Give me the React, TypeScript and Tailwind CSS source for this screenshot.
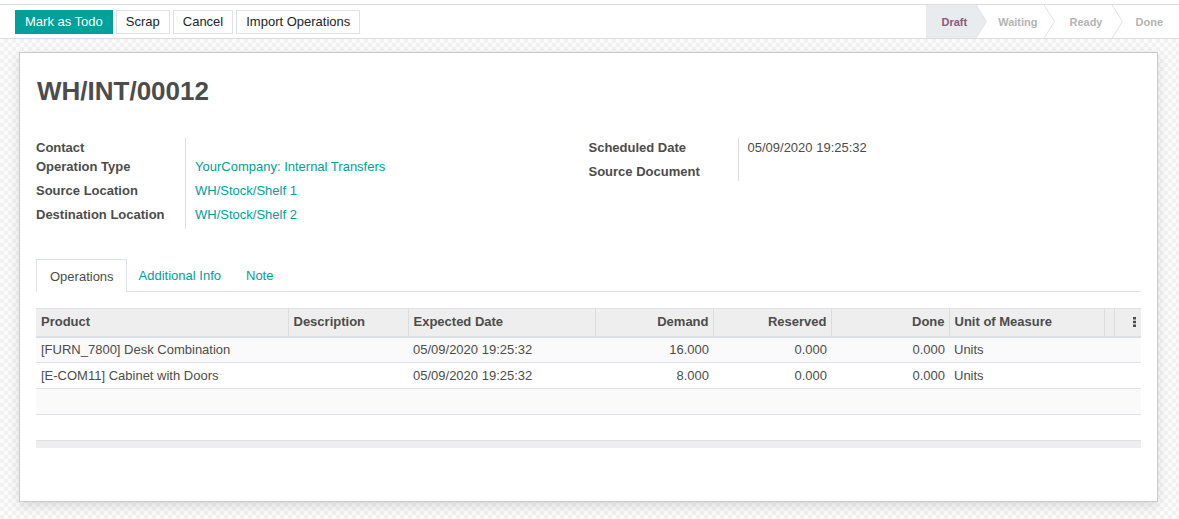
import React from "react";

const font = "font-['Liberation_Sans',Arial,sans-serif]";

function Chevron({ filled }: { filled?: boolean }) {
  return (
    <svg width="11" height="33" viewBox="0 0 11 33" className="block shrink-0">
      {filled ? (
        <polygon points="0,0 10.5,16.5 0,33" fill="#e9ecef" />
      ) : null}
      <polyline points="0,0 10.5,16.5 0,33" fill="none" stroke="#dee2e6" strokeWidth="1" />
    </svg>
  );
}

function Kebab() {
  return (
    <svg width="3" height="10" viewBox="0 0 3 10" className="inline-block">
      <rect x="0" y="0" width="3" height="2.5" fill="#4c4c4c" />
      <rect x="0" y="3.75" width="3" height="2.5" fill="#4c4c4c" />
      <rect x="0" y="7.5" width="3" height="2.5" fill="#4c4c4c" />
    </svg>
  );
}

const rows = [
  { product: "[FURN_7800] Desk Combination", date: "05/09/2020 19:25:32", demand: "16.000" },
  { product: "[E-COM11] Cabinet with Doors", date: "05/09/2020 19:25:32", demand: "8.000" },
];

export default function App() {
  return (
    <div className={`${font} w-[1179px] h-[519px] flex flex-col bg-white text-[13px] text-[#4c4c4c] overflow-hidden`}>
      {/* Control panel */}
      <div className="mt-[4px] h-[35px] shrink-0 border-t border-b border-[#dcdcdc] bg-white flex items-stretch justify-between">
        <div className="flex items-center gap-[3px] pl-[15px]">
          <button className="h-[24px] px-[9px] bg-[#00a09d] border border-[#00a09d] text-white">Mark as Todo</button>
          <button className="h-[24px] px-[9px] bg-white border border-[#dee2e6] text-[#212529]">Scrap</button>
          <button className="h-[24px] px-[9px] bg-white border border-[#dee2e6] text-[#212529]">Cancel</button>
          <button className="h-[24px] px-[9px] bg-white border border-[#dee2e6] text-[#212529]">Import Operations</button>
        </div>
        <div className="flex items-stretch text-[11px] font-bold">
          <div className="flex items-center bg-[#e9ecef] pl-[15px] pr-[9px] pt-[2px] text-[#875a7b]">Draft</div>
          <Chevron filled />
          <div className="flex items-center pl-[11px] pr-[7px] pt-[2px] text-[#b3b3b3]">Waiting</div>
          <Chevron />
          <div className="flex items-center pl-[14px] pr-[9px] pt-[2px] text-[#b3b3b3]">Ready</div>
          <Chevron />
          <div className="flex items-center pl-[13px] pr-[16px] pt-[2px] text-[#b3b3b3]">Done</div>
        </div>
      </div>

      {/* Content area */}
      <div className="flex-1 bg-[#f7f7f7] bg-[repeating-conic-gradient(#f1f1f1_0%_25%,#fbfbfb_0%_50%)] bg-[length:8px_8px] pt-[13px] pl-[19px] pr-[21px]">
        <div className="h-[450px] bg-white border border-[#c9c9d1] shadow-[0_4px_10px_rgba(0,0,0,0.12)] px-[16px] pt-[25px]">
          <h1 className="text-[26px] leading-[26px] font-bold text-[#4c4c4c] pl-px">WH/INT/00012</h1>

          {/* Field groups */}
          <div className="mt-[34px] grid grid-cols-2">
            <div className="flex">
              <div className="w-[150px] border-r border-[#dcdcdc] font-bold">
                <div className="h-[19px] flex items-center">Contact</div>
                <div className="h-[19px] flex items-center">Operation Type</div>
                <div className="h-[24px] mt-[3px] flex items-center">Source Location</div>
                <div className="h-[24px] flex items-center">Destination Location</div>
                <div className="h-[2px]" />
              </div>
              <div className="pl-[9px] text-[#00a09d]">
                <div className="h-[19px]" />
                <div className="h-[19px] flex items-center">YourCompany: Internal Transfers</div>
                <div className="h-[24px] mt-[3px] flex items-center">WH/Stock/Shelf 1</div>
                <div className="h-[24px] flex items-center">WH/Stock/Shelf 2</div>
              </div>
            </div>
            <div className="flex">
              <div className="w-[150px] border-r border-[#dcdcdc] font-bold self-start">
                <div className="h-[20px] flex items-center">Scheduled Date</div>
                <div className="h-[23px] flex items-center pt-[4px]">Source Document</div>
              </div>
              <div className="pl-[9px]">
                <div className="h-[20px] flex items-center">05/09/2020 19:25:32</div>
              </div>
            </div>
          </div>

          {/* Tabs */}
          <div className="mt-[30px] flex border-b border-[#dee2e6] h-[33px]">
            <div className="pl-[13px] pr-[12px] pt-px flex items-center border border-b-0 border-[#dee2e6] bg-white -mb-px h-[33px] text-[#4c4c4c]">Operations</div>
            <div className="pl-[12px] pr-[12px] pt-px flex items-center text-[#00a09d]">Additional Info</div>
            <div className="pl-[13px] pr-[12px] pt-px flex items-center text-[#00a09d]">Note</div>
          </div>

          {/* Table */}
          <table className="mt-[16px] w-full table-fixed border-collapse">
            <colgroup>
              <col className="w-[252px]" />
              <col className="w-[120px]" />
              <col className="w-[187px]" />
              <col className="w-[118px]" />
              <col className="w-[118px]" />
              <col className="w-[118px]" />
              <col className="w-[155px]" />
              <col className="w-[10px]" />
              <col className="w-[27px]" />
            </colgroup>
            <thead>
              <tr className="h-[28px] bg-[#eeeeee] font-bold border-t border-[#dee2e6] border-b-2 border-b-[#dcdfe3]">
                <th className="text-left pl-[5px] pr-[4px] pb-[2px] font-bold border-r border-[#dcdcdc]">Product</th>
                <th className="text-left pl-[5px] pr-[4px] pb-[2px] font-bold border-r border-[#dcdcdc]">Description</th>
                <th className="text-left pl-[5px] pr-[4px] pb-[2px] font-bold border-r border-[#dcdcdc]">Expected Date</th>
                <th className="text-right pl-[5px] pr-[4px] pb-[2px] font-bold border-r border-[#dcdcdc]">Demand</th>
                <th className="text-right pl-[5px] pr-[4px] pb-[2px] font-bold border-r border-[#dcdcdc]">Reserved</th>
                <th className="text-right pl-[5px] pr-[4px] pb-[2px] font-bold border-r border-[#dcdcdc]">Done</th>
                <th className="text-left pl-[5px] pr-[4px] pb-[2px] font-bold border-r border-[#dcdcdc]">Unit of Measure</th>
                <th className="border-r border-[#dcdcdc]"></th>
                <th className="text-right pr-[5px] pb-[2px]"><Kebab /></th>
              </tr>
            </thead>
            <tbody>
              {rows.map((r, i) => (
                <tr key={i} className={`h-[26px] border-b border-[#dee2e6] ${i % 2 === 0 ? "bg-[#fafafa]" : "bg-white"}`}>
                  <td className="pl-[5px] pr-[4px] whitespace-nowrap">{r.product}</td>
                  <td className="pl-[5px] pr-[4px]"></td>
                  <td className="pl-[5px] pr-[4px] whitespace-nowrap">{r.date}</td>
                  <td className="pl-[5px] pr-[4px] text-right">{r.demand}</td>
                  <td className="pl-[5px] pr-[4px] text-right">0.000</td>
                  <td className="pl-[5px] pr-[4px] text-right">0.000</td>
                  <td className="pl-[5px] pr-[4px]">Units</td>
                  <td></td>
                  <td></td>
                </tr>
              ))}
              <tr className="h-[26px] border-b border-[#dee2e6] bg-[#fafafa]">
                <td colSpan={9}></td>
              </tr>
              <tr className="h-[26px] bg-white">
                <td colSpan={9}></td>
              </tr>
            </tbody>
            <tfoot>
              <tr className="h-[7px] bg-[#eeeeee] border-t border-[#dee2e6]">
                <td colSpan={9}></td>
              </tr>
            </tfoot>
          </table>
        </div>
      </div>
    </div>
  );
}
